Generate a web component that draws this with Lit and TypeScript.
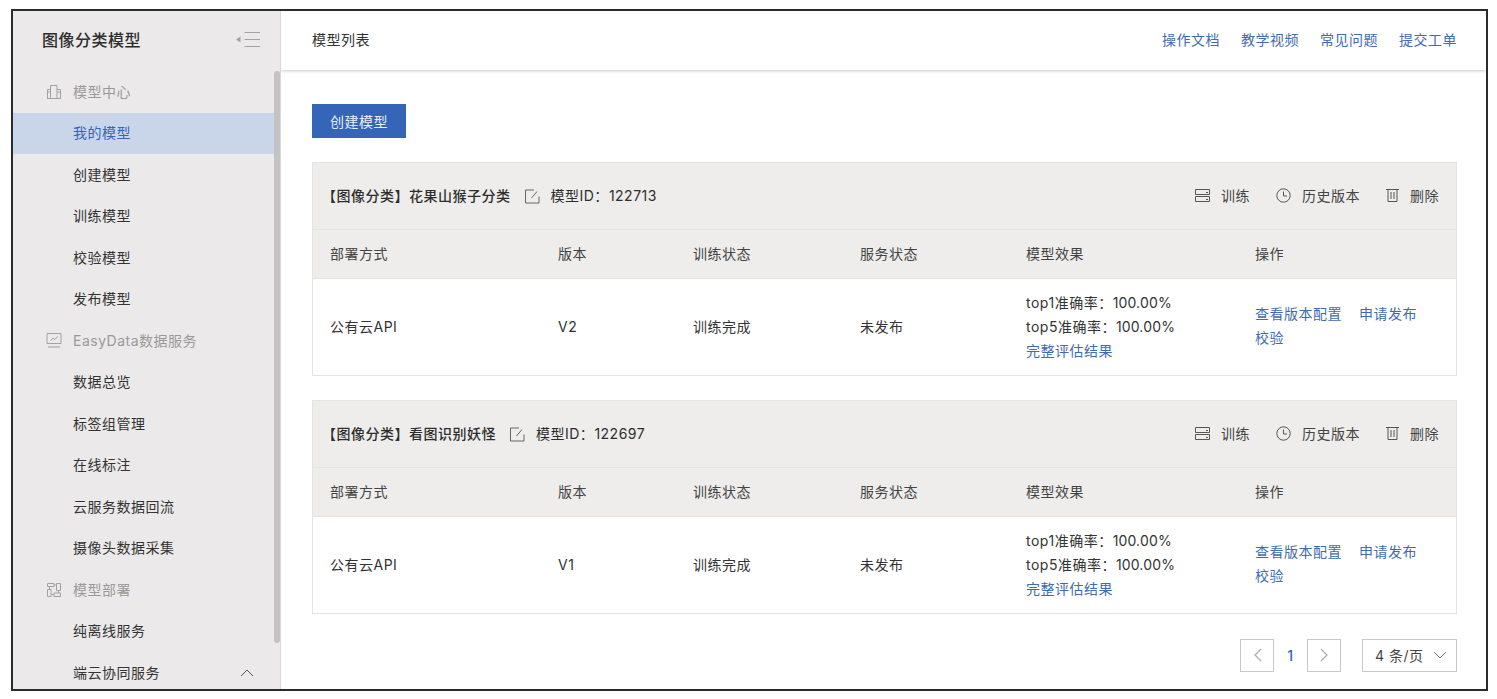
import { LitElement, html, css, svg } from "lit";
import { customElement } from "lit/decorators.js";

const icoBuilding = svg`<path d="M4.5 14V1.5H11V14M1.5 14V5.5H4.5M11 5.5H14.5V14M1 14.5H15M4.5 8H1.5M11 8H14.5" fill="none" stroke="currentColor"/>`;
const icoChart = svg`<path d="M1 .5H15V10.5H1ZM2 14H14M4.5 8L7 5L9 6.5L11.5 3.5" fill="none" stroke="currentColor"/>`;
const icoDeploy = svg`<path d="M1.5 1.5H8V4.5H1.5ZM10.5 1.5H14.5V8.5H10.5ZM1.5 7.5H5V14.5H1.5ZM8 11H14.5V14.5H8ZM8 3H10.5M3.5 4.5V7.5M12.5 8.5V11M5 12.5H8" fill="none" stroke="currentColor"/>`;

type Entry = { t: string; head?: boolean; icon?: unknown; active?: boolean; chevron?: boolean };
const MENU: Entry[] = [
  { t: "模型中心", head: true, icon: icoBuilding },
  { t: "我的模型", active: true },
  { t: "创建模型" },
  { t: "训练模型" },
  { t: "校验模型" },
  { t: "发布模型" },
  { t: "EasyData数据服务", head: true, icon: icoChart },
  { t: "数据总览" },
  { t: "标签组管理" },
  { t: "在线标注" },
  { t: "云服务数据回流" },
  { t: "摄像头数据采集" },
  { t: "模型部署", head: true, icon: icoDeploy },
  { t: "纯离线服务" },
  { t: "端云协同服务", chevron: true },
];

const MODELS = [
  { name: "【图像分类】花果山猴子分类", id: "122713", ver: "V2" },
  { name: "【图像分类】看图识别妖怪", id: "122697", ver: "V1" },
];

@customElement("app-root")
export class AppRoot extends LitElement {
  static styles = css`
    :host {
      display: block;
      height: 699px;
      overflow: hidden;
      background: #fff;
      font-family: "Inter", "Noto Sans CJK SC", sans-serif;
      font-size: 14px;
      letter-spacing: 0.5px;
      color: #333;
    }
    svg { display: block; flex: none; }
    .frame {
      box-sizing: border-box;
      margin: 9px 0 0 11px;
      width: 1477px;
      height: 682px;
      border: 2px solid #2b2b2b;
      display: flex;
      overflow: hidden;
    }
    .side {
      position: relative;
      flex: none;
      width: 268px;
      box-sizing: border-box;
      background: #ebe9e9;
      border-right: 1px solid #d9d9d9;
      overflow: hidden;
    }
    .brand {
      box-sizing: border-box;
      height: 60px;
      padding: 0 20px 4px 29px;
      display: flex;
      align-items: center;
      justify-content: space-between;
      font-size: 16px;
      font-weight: 500;
      color: #2d2d2d;
    }
    .brand svg { color: #a3a3a3; }
    .menu { width: 261px; }
    .item {
      box-sizing: border-box;
      height: 41.5px;
      display: flex;
      align-items: center;
      padding: 0 0 2px 60px;
      position: relative;
      white-space: nowrap;
    }
    .item.head { color: #9a9a9a; }
    .item.active { background: #c9d5e9; color: #3565b7; }
    .item .ico { position: absolute; left: 33px; top: 13px; color: #a3a3a3; }
    .item .chev { position: absolute; left: 227px; top: 17px; color: #555; }
    .thumb {
      position: absolute;
      right: 0;
      top: 60px;
      width: 6px;
      height: 572px;
      border-radius: 3px;
      background: #c4c2c2;
    }
    .main { flex: 1; min-width: 0; display: flex; flex-direction: column; }
    .top {
      box-sizing: border-box;
      flex: none;
      height: 59px;
      padding: 0 29px 4px 31px;
      display: flex;
      align-items: center;
      justify-content: space-between;
      box-shadow: 0 1px 3px rgba(0, 0, 0, 0.22);
    }
    .links { display: flex; gap: 21px; color: #3f6cb0; }
    .body { flex: 1; padding: 34px 29px 0 31px; }
    .create {
      box-sizing: border-box;
      width: 94px;
      height: 34px;
      padding-bottom: 1px;
      background: #3565b7;
      color: #e8eef8;
      display: flex;
      align-items: center;
      justify-content: center;
    }
    .card { margin-top: 24px; border: 1px solid #e4e4e4; }
    .title {
      box-sizing: border-box;
      height: 67px;
      background: #eeedec;
      border-bottom: 1px solid #e4e4e4;
      display: flex;
      align-items: center;
      padding: 0 17px 2px 9px;
      font-weight: 500;
      color: #2d2d2d;
      white-space: nowrap;
    }
    .title .edit { margin: 2px 11px 0 14px; color: #666; }
    .title .id { font-weight: 400; }
    .acts { margin-left: auto; display: flex; align-items: center; font-weight: 400; color: #444; }
    .act { display: flex; align-items: center; gap: 11px; margin-left: 26px; }
    .act svg { color: #555; }
    .row { box-sizing: border-box; display: grid; grid-template-columns: 228px 135px 167px 166px 229px 1fr; padding-left: 17px; }
    .row.thead { height: 49px; padding-bottom: 2px; background: #eeedec; border-bottom: 1px solid #e4e4e4; align-items: center; color: #444; }
    .row.tbody { height: 96px; align-items: center; padding-bottom: 2px; }
    .effect { line-height: 24px; margin-top: 2px; }
    .effect .val { letter-spacing: 0.15px; }
    .link { color: #3f6cb0; }
    .ops { line-height: 24px; width: 190px; display: flex; flex-wrap: wrap; column-gap: 17px; }
    .pager {
      margin-top: 25px;
      display: flex;
      justify-content: flex-end;
      align-items: center;
      height: 32px;
    }
    .pg {
      box-sizing: border-box;
      width: 34px;
      height: 33px;
      border: 1px solid #c9c9c9;
      display: flex;
      align-items: center;
      justify-content: center;
      color: #aaa;
    }
    .num { width: 33px; text-align: center; color: #3565b7; font-weight: 500; }
    .size {
      box-sizing: border-box;
      margin-left: 21px;
      width: 95px;
      height: 33px;
      border: 1px solid #c9c9c9;
      display: flex;
      align-items: center;
      gap: 9px;
      padding: 0 0 1px 12px;
      color: #444;
    }
    .size svg { color: #777; }
  `;

  private card(m: { name: string; id: string; ver: string }) {
    return html`<section class="card">
      <div class="title">
        <span>${m.name}</span>
        <svg class="edit" width="15" height="15" viewBox="0 0 15 15"><path d="M14 7.5V14H.5V1H9M12 2.5L6.5 9" fill="none" stroke="currentColor"/></svg>
        <span class="id">模型ID：${m.id}</span>
        <div class="acts">
          <span class="act"><svg width="15" height="13" viewBox="0 0 15 13"><path d="M.5 .5H14.5V5.5H.5ZM.5 7.5H14.5V12.5H.5ZM11 3.5H13M11 10.5H13" fill="none" stroke="currentColor"/></svg>训练</span>
          <span class="act"><svg width="15" height="15" viewBox="0 0 15 15"><circle cx="7.5" cy="7.5" r="6.7" fill="none" stroke="currentColor"/><path d="M7.5 3.5V8H11" fill="none" stroke="currentColor"/></svg>历史版本</span>
          <span class="act"><svg width="13" height="14" viewBox="0 0 13 14"><path d="M0 1.5H13M2 1.5V13.5H11V1.5M5 4V11M8 4V11" fill="none" stroke="currentColor"/></svg>删除</span>
        </div>
      </div>
      <div class="row thead">
        <span>部署方式</span><span>版本</span><span>训练状态</span><span>服务状态</span><span>模型效果</span><span>操作</span>
      </div>
      <div class="row tbody">
        <span>公有云API</span><span>${m.ver}</span><span>训练完成</span><span>未发布</span>
        <div class="effect">
          <div>top1准确率：<span class="val">100.00%</span></div>
          <div>top5准确率：<span class="val">100.00%</span></div>
          <div class="link">完整评估结果</div>
        </div>
        <div class="ops link"><span>查看版本配置</span><span>申请发布</span><span>校验</span></div>
      </div>
    </section>`;
  }

  render() {
    return html`<div class="frame">
      <aside class="side">
        <div class="brand">
          <span>图像分类模型</span>
          <svg width="24" height="17" viewBox="0 0 24 17"><path d="M0 8.5L4.5 5.5V11.5Z" fill="currentColor"/><path d="M8.5 1.5H24M8.5 8.5H24M8.5 15.5H24" stroke="currentColor" fill="none"/></svg>
        </div>
        <nav class="menu">
          ${MENU.map(
            (e) => html`<div class="item ${e.head ? "head" : ""} ${e.active ? "active" : ""}">
              ${e.icon ? html`<svg class="ico" width="16" height="16" viewBox="0 0 16 16">${e.icon}</svg>` : ""}
              ${e.t}
              ${e.chevron ? html`<svg class="chev" width="14" height="8" viewBox="0 0 14 8"><path d="M1 7L7 1L13 7" fill="none" stroke="currentColor"/></svg>` : ""}
            </div>`
          )}
        </nav>
        <div class="thumb"></div>
      </aside>
      <main class="main">
        <header class="top">
          <span>模型列表</span>
          <div class="links"><span>操作文档</span><span>教学视频</span><span>常见问题</span><span>提交工单</span></div>
        </header>
        <div class="body">
          <div class="create">创建模型</div>
          ${MODELS.map((m) => this.card(m))}
          <div class="pager">
            <span class="pg"><svg width="9" height="14" viewBox="0 0 9 14"><path d="M8 1L2 7L8 13" fill="none" stroke="currentColor" stroke-width="1.2"/></svg></span>
            <span class="num">1</span>
            <span class="pg"><svg width="9" height="14" viewBox="0 0 9 14"><path d="M1 1L7 7L1 13" fill="none" stroke="currentColor" stroke-width="1.2"/></svg></span>
            <span class="size">4 条/页<svg width="14" height="8" viewBox="0 0 14 8"><path d="M1 1L7 7L13 1" fill="none" stroke="currentColor"/></svg></span>
          </div>
        </div>
      </main>
    </div>`;
  }
}
